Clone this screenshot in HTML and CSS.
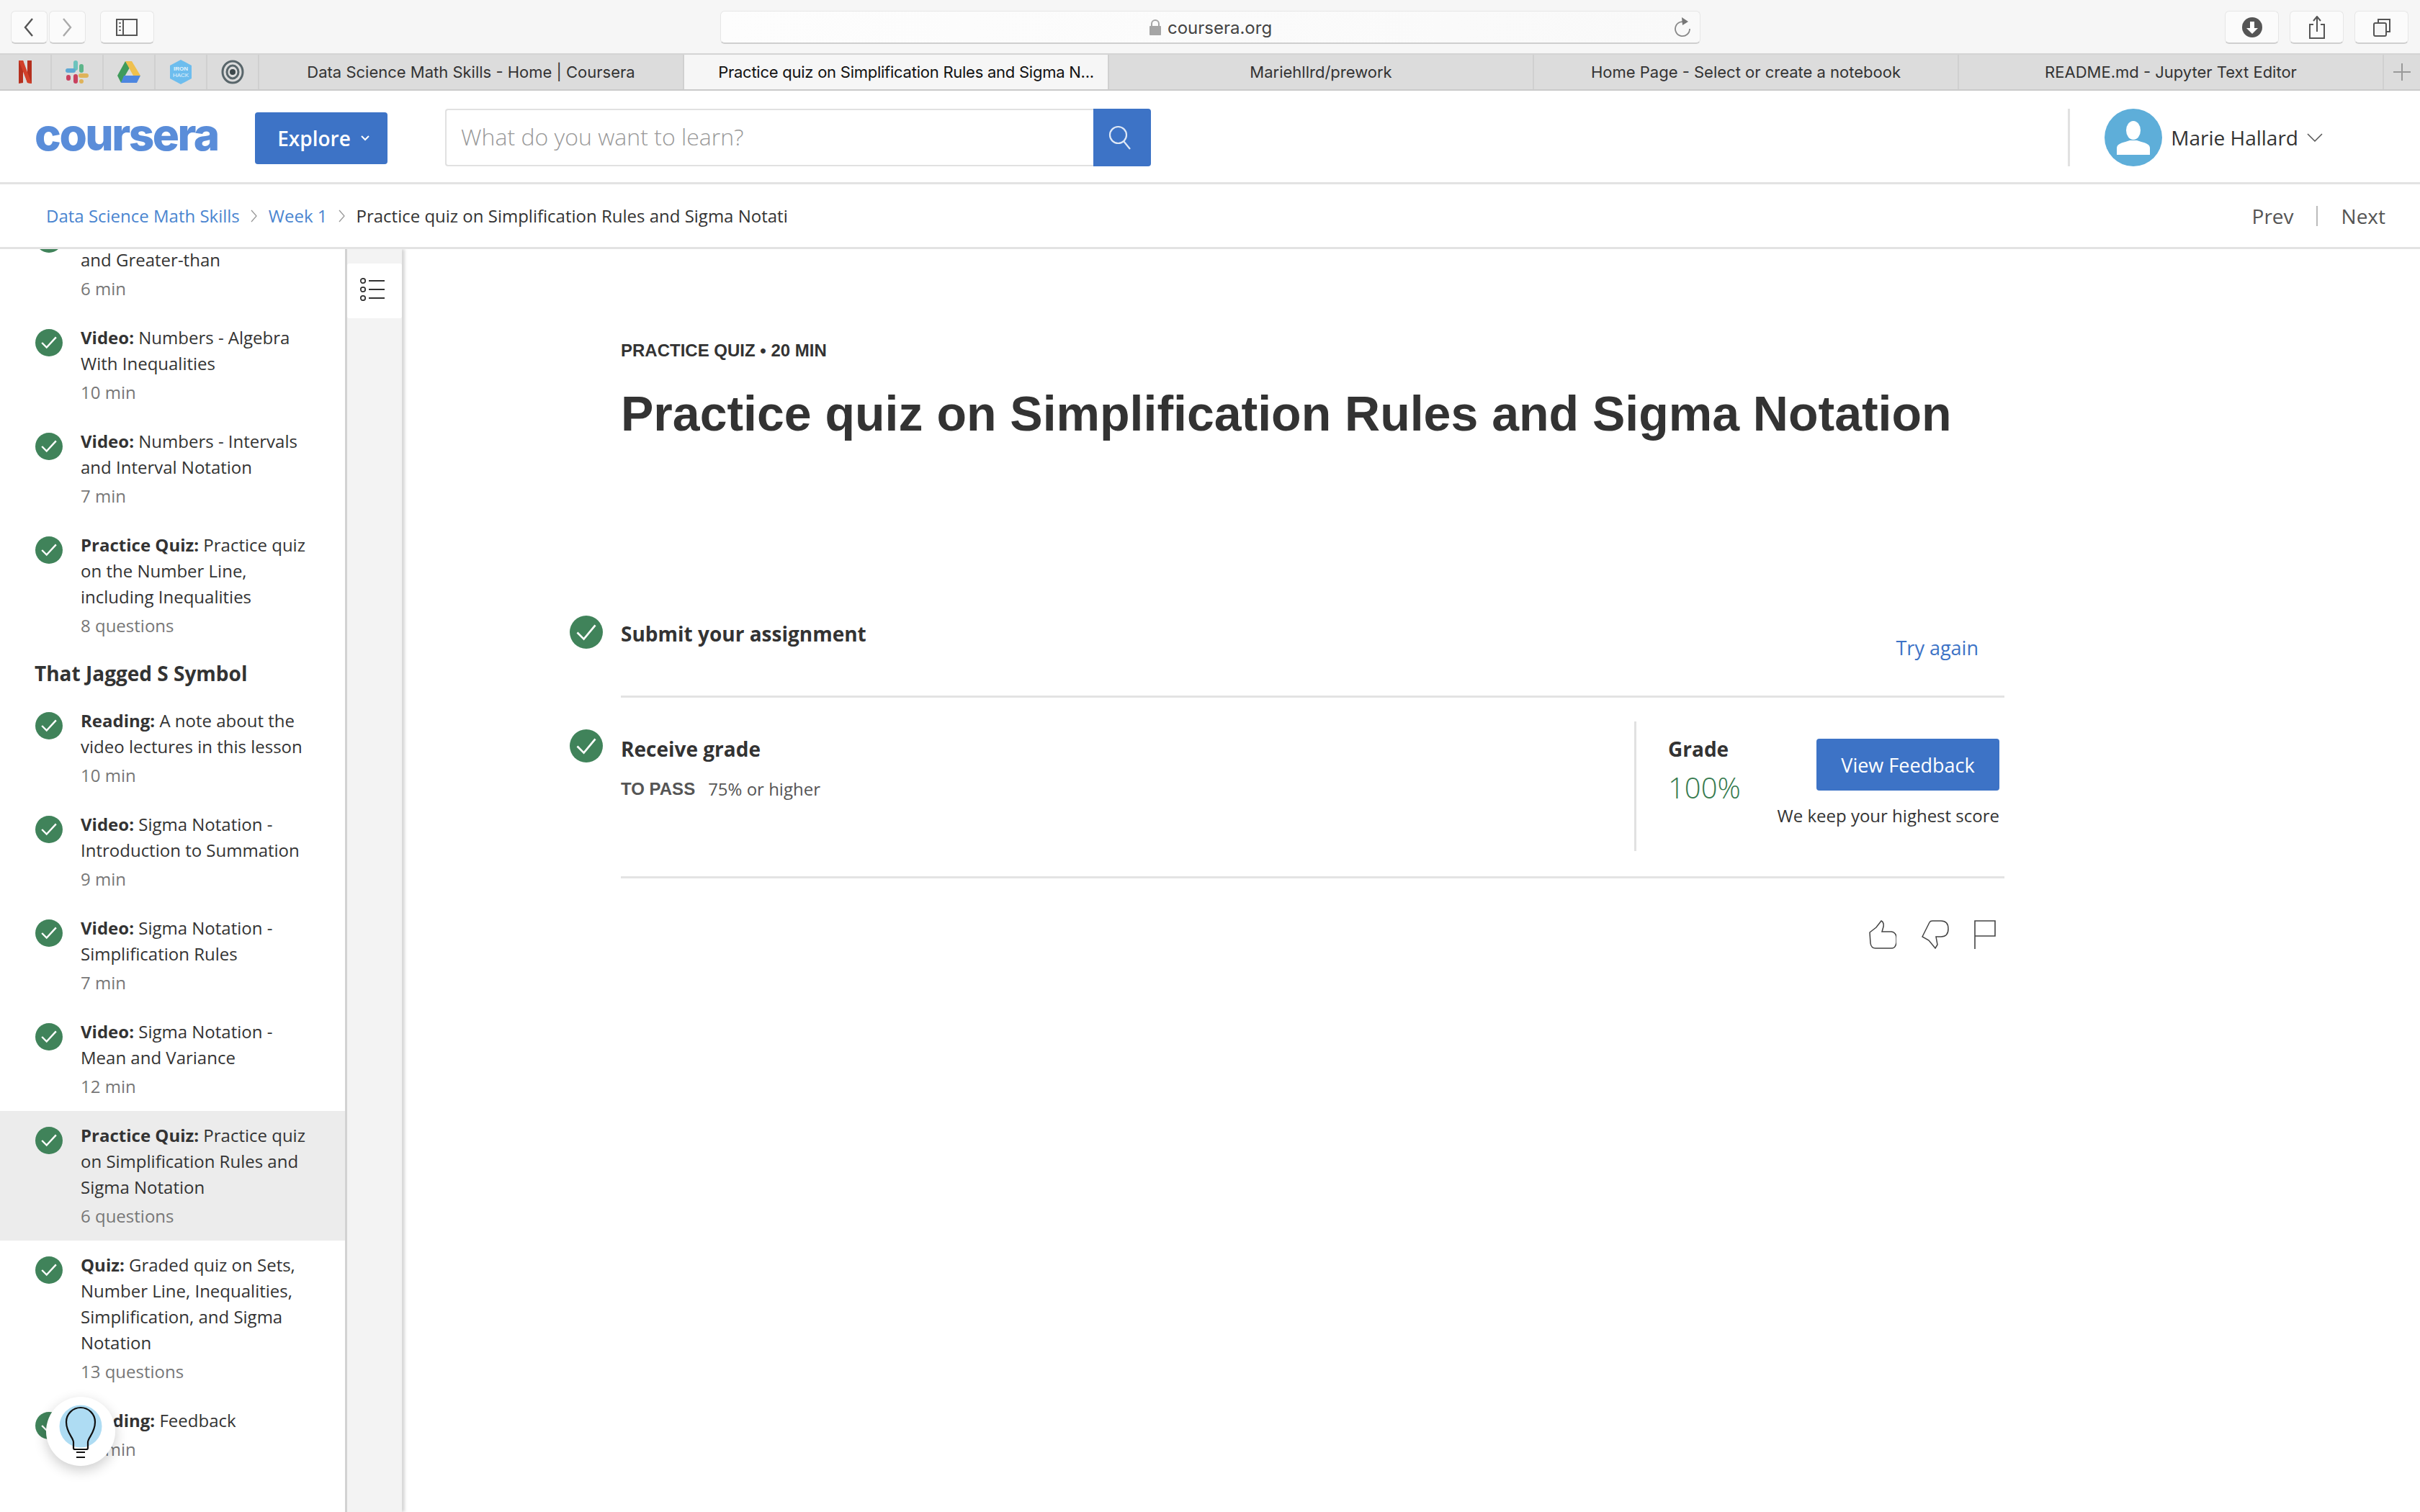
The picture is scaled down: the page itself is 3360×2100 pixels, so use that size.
FILE: index.html
```html
<!DOCTYPE html>
<html lang="en">
    <head>
        <meta charset="UTF-8" />
        <meta name="viewport" content="width=device-width, initial-scale=1.0" />
        <title>Practice quiz on Simplification Rules and Sigma Notation | Coursera</title>
        <link rel="stylesheet" href="styles.css">
    </head>
    <body>
        <!-- browser chrome -->
        <div class="toolbar">
            <div class="tool-btn nav-btn">
                <svg width="14" height="26" viewBox="0 0 14 26"><path d="M12 1 2 13l10 12" fill="none" stroke="#555" stroke-width="2.4"/></svg>
            </div>
            <div class="tool-btn nav-btn nav-next">
                <svg width="14" height="26" viewBox="0 0 14 26"><path d="M2 1l10 12L2 25" fill="none" stroke="#aaa" stroke-width="2.4"/></svg>
            </div>
            <div class="tool-btn sidebar-btn">
                <svg width="30" height="24" viewBox="0 0 30 24"><path d="M1 1h28v22H1zM10 1v22" fill="none" stroke="#555" stroke-width="2"/><path d="M4 5h3v2H4zM4 10h3v2H4zM4 15h3v2H4z" fill="#777"/></svg>
            </div>
            <div class="address">
                <svg class="lock" width="18" height="22" viewBox="0 0 18 22"><path d="M4 10V6a5 5 0 0 1 10 0v4" fill="none" stroke="#a5a5a5" stroke-width="2"/><rect x="1" y="9" width="16" height="13" rx="1" fill="#a5a5a5"/></svg>
                <span class="address-text">coursera.org</span>
                <svg class="reload" width="24" height="28" viewBox="0 0 24 28"><path d="M17 7.5A10 10 0 1 0 22 16" fill="none" stroke="#888" stroke-width="1.8"/><path d="M11 0l9 6-8 5z" fill="#777"/></svg>
            </div>
            <div class="tool-btn">
                <svg width="28" height="28" viewBox="0 0 28 28"><circle cx="14" cy="14" r="14" fill="#555"/><path d="M11 6h6v9h5l-8 8-8-8h5z" fill="#fff"/></svg>
            </div>
            <div class="tool-btn">
                <svg width="24" height="32" viewBox="0 0 24 32"><path d="M7 12H2v19h20V12h-5" fill="none" stroke="#555" stroke-width="2"/><path d="M12 22V2M7 7l5-6 5 6" fill="none" stroke="#555" stroke-width="2"/></svg>
            </div>
            <div class="tool-btn">
                <svg width="26" height="26" viewBox="0 0 26 26"><path d="M8 6V2h16v17h-4" fill="none" stroke="#555" stroke-width="2"/><rect x="2" y="7" width="17" height="18" rx="2" fill="#f6f6f6" stroke="#555" stroke-width="2"/></svg>
            </div>
        </div>

        <div class="tabs">
            <div class="fav">
                <svg width="20" height="32" viewBox="0 0 20 32"><path d="M1 0h6l6 20V0h6v32l-6-1L7 12v19l-6 1z" fill="#b5301f"/><path d="M1 0h6l12 32-6-1z" fill="#d2402a"/></svg>
            </div>
            <div class="fav">
                <svg width="32" height="32" viewBox="0 0 32 32">
                    <rect x="11" y="0" width="6" height="14" rx="3" fill="#6cc3bd"/>
                    <rect x="0" y="11" width="14" height="6" rx="3" fill="#5fa8d3"/>
                    <rect x="19" y="5" width="6" height="12" rx="3" fill="#5eb58a"/>
                    <rect x="18" y="18" width="14" height="6" rx="3" fill="#dfb35a"/>
                    <rect x="11" y="19" width="6" height="13" rx="3" fill="#c9415f"/>
                    <rect x="1" y="20" width="6" height="8" rx="3" fill="#c9415f"/>
                    <rect x="19" y="26" width="6" height="6" rx="3" fill="#dfb35a"/>
                </svg>
            </div>
            <div class="fav">
                <svg width="32" height="30" viewBox="0 0 32 30"><path d="M11 0 0 20l5 10 12-21z" fill="#3f9b5b"/><path d="M11 0h9l12 20H22z" fill="#efc04e"/><path d="M9 20h23l-5 10H5z" fill="#4d86e0"/></svg>
            </div>
            <div class="fav">
                <svg width="32" height="34" viewBox="0 0 32 34"><path d="M16 0l15 8v18l-15 8-15-8V8z" fill="#6dbdee"/><text x="16" y="15" class="hack-text">IRON</text><text x="16" y="24" class="hack-text hack-light">HACK</text></svg>
            </div>
            <div class="fav">
                <svg width="32" height="34" viewBox="0 0 32 34"><ellipse cx="16" cy="17" rx="14" ry="15" fill="none" stroke="#59666b" stroke-width="3"/><path d="M7 9q9-8 19 2M25 25q-9 8-19-2" fill="none" stroke="#dcdcdc" stroke-width="2"/><ellipse cx="16" cy="17" rx="8" ry="9" fill="none" stroke="#59666b" stroke-width="3"/><circle cx="16" cy="17" r="4" fill="#3c474b"/></svg>
            </div>
            <div class="tab">Data Science Math Skills - Home | Coursera</div>
            <div class="tab active">Practice quiz on Simplification Rules and Sigma N...</div>
            <div class="tab">Mariehllrd/prework</div>
            <div class="tab">Home Page - Select or create a notebook</div>
            <div class="tab">README.md - Jupyter Text Editor</div>
            <div class="tab-add">
                <svg width="24" height="24" viewBox="0 0 24 24"><path d="M12 0v24M0 12h24" stroke="#999" stroke-width="2"/></svg>
            </div>
        </div>

        <!-- site header -->
        <header class="site-header">
            <div class="logo">coursera</div>
            <button class="explore" type="button">
                Explore
                <svg width="12" height="8" viewBox="0 0 12 8"><path d="M1 1l5 5 5-5" fill="none" stroke="#fff" stroke-width="2"/></svg>
            </button>
            <div class="search">
                <input class="search-input" type="text" placeholder="What do you want to learn?" />
                <div class="search-btn">
                    <svg width="32" height="34" viewBox="0 0 32 34"><circle cx="13.500" cy="13.500" r="11.500" fill="none" stroke="#dfe8f6" stroke-width="2.200"/><path d="M21 22l9 11" stroke="#dfe8f6" stroke-width="2.200"/></svg>
                </div>
            </div>
            <div class="user">
                <div class="avatar">
                    <svg width="80" height="80" viewBox="0 0 80 80"><ellipse cx="40" cy="30" rx="10" ry="13" fill="#fff"/><path d="M17 64v-9c0-5 4-7 12-9l6-2h10l6 2c8 2 12 4 12 9v9z" fill="#fff"/></svg>
                </div>
                <span class="user-name">Marie Hallard</span>
                <svg width="22" height="12" viewBox="0 0 22 12"><path d="M1 1l10 10L21 1" fill="none" stroke="#555" stroke-width="1.500"/></svg>
            </div>
        </header>

        <div class="crumbs">
            <a class="crumb-link">Data Science Math Skills</a>
            <svg class="crumb-sep" width="10" height="20" viewBox="0 0 10 20"><path d="M1 2l7 8-7 8" fill="none" stroke="#999" stroke-width="1.300"/></svg>
            <a class="crumb-link">Week 1</a>
            <svg class="crumb-sep" width="10" height="20" viewBox="0 0 10 20"><path d="M1 2l7 8-7 8" fill="none" stroke="#999" stroke-width="1.300"/></svg>
            <span class="crumb-current">Practice quiz on Simplification Rules and Sigma Notati</span>
            <div class="pager">
                <span class="pager-prev">Prev</span>
                <span class="pager-next">Next</span>
            </div>
        </div>

        <div class="workspace">
            <!-- lesson list, scrolled a bit -->
            <aside class="sidebar">
                <div class="lesson-list">
                    <div class="lesson">
                        <span class="check"><svg width="22" height="18" viewBox="0 0 22 18"><path d="M2 9l6 6L20 2" fill="none" stroke="#fff" stroke-width="2.200"/></svg></span>
                        <div class="lesson-body">
                            <div class="lesson-title"><b>Video:</b> Numbers - Less-than and Greater-than</div>
                            <div class="lesson-meta">6 min</div>
                        </div>
                    </div>
                    <div class="lesson">
                        <span class="check"><svg width="22" height="18" viewBox="0 0 22 18"><path d="M2 9l6 6L20 2" fill="none" stroke="#fff" stroke-width="2.200"/></svg></span>
                        <div class="lesson-body">
                            <div class="lesson-title"><b>Video:</b> Numbers - Algebra With Inequalities</div>
                            <div class="lesson-meta">10 min</div>
                        </div>
                    </div>
                    <div class="lesson">
                        <span class="check"><svg width="22" height="18" viewBox="0 0 22 18"><path d="M2 9l6 6L20 2" fill="none" stroke="#fff" stroke-width="2.200"/></svg></span>
                        <div class="lesson-body">
                            <div class="lesson-title"><b>Video:</b> Numbers - Intervals and Interval Notation</div>
                            <div class="lesson-meta">7 min</div>
                        </div>
                    </div>
                    <div class="lesson">
                        <span class="check"><svg width="22" height="18" viewBox="0 0 22 18"><path d="M2 9l6 6L20 2" fill="none" stroke="#fff" stroke-width="2.200"/></svg></span>
                        <div class="lesson-body">
                            <div class="lesson-title"><b>Practice Quiz:</b> Practice quiz on the Number Line, including Inequalities</div>
                            <div class="lesson-meta">8 questions</div>
                        </div>
                    </div>
                    <h3 class="lesson-heading">That Jagged S Symbol</h3>
                    <div class="lesson">
                        <span class="check"><svg width="22" height="18" viewBox="0 0 22 18"><path d="M2 9l6 6L20 2" fill="none" stroke="#fff" stroke-width="2.200"/></svg></span>
                        <div class="lesson-body">
                            <div class="lesson-title"><b>Reading:</b> A note about the video lectures in this lesson</div>
                            <div class="lesson-meta">10 min</div>
                        </div>
                    </div>
                    <div class="lesson">
                        <span class="check"><svg width="22" height="18" viewBox="0 0 22 18"><path d="M2 9l6 6L20 2" fill="none" stroke="#fff" stroke-width="2.200"/></svg></span>
                        <div class="lesson-body">
                            <div class="lesson-title"><b>Video:</b> Sigma Notation - Introduction to Summation</div>
                            <div class="lesson-meta">9 min</div>
                        </div>
                    </div>
                    <div class="lesson">
                        <span class="check"><svg width="22" height="18" viewBox="0 0 22 18"><path d="M2 9l6 6L20 2" fill="none" stroke="#fff" stroke-width="2.200"/></svg></span>
                        <div class="lesson-body">
                            <div class="lesson-title"><b>Video:</b> Sigma Notation - Simplification Rules</div>
                            <div class="lesson-meta">7 min</div>
                        </div>
                    </div>
                    <div class="lesson">
                        <span class="check"><svg width="22" height="18" viewBox="0 0 22 18"><path d="M2 9l6 6L20 2" fill="none" stroke="#fff" stroke-width="2.200"/></svg></span>
                        <div class="lesson-body">
                            <div class="lesson-title"><b>Video:</b> Sigma Notation - Mean and Variance</div>
                            <div class="lesson-meta">12 min</div>
                        </div>
                    </div>
                    <div class="lesson lesson-active">
                        <span class="check"><svg width="22" height="18" viewBox="0 0 22 18"><path d="M2 9l6 6L20 2" fill="none" stroke="#fff" stroke-width="2.200"/></svg></span>
                        <div class="lesson-body">
                            <div class="lesson-title"><b>Practice Quiz:</b> Practice quiz on Simplification Rules and Sigma Notation</div>
                            <div class="lesson-meta">6 questions</div>
                        </div>
                    </div>
                    <div class="lesson">
                        <span class="check"><svg width="22" height="18" viewBox="0 0 22 18"><path d="M2 9l6 6L20 2" fill="none" stroke="#fff" stroke-width="2.200"/></svg></span>
                        <div class="lesson-body">
                            <div class="lesson-title"><b>Quiz:</b> Graded quiz on Sets, Number Line, Inequalities, Simplification, and Sigma Notation</div>
                            <div class="lesson-meta">13 questions</div>
                        </div>
                    </div>
                    <div class="lesson">
                        <span class="check"><svg width="22" height="18" viewBox="0 0 22 18"><path d="M2 9l6 6L20 2" fill="none" stroke="#fff" stroke-width="2.200"/></svg></span>
                        <div class="lesson-body">
                            <div class="lesson-title"><b>Reading:</b> Feedback</div>
                            <div class="lesson-meta">10 min</div>
                        </div>
                    </div>
                </div>

                <div class="tip">
                    <svg width="96" height="96" viewBox="0 0 96 96">
                        <circle cx="48" cy="41" r="29.500" fill="#aedcf3"/>
                        <path d="M38 71V63c0-6-10-13-10-28a20 20 0 0 1 40 0c0 15-10 22-10 28v8q0 2-2 2H40q-2 0-2-2z" fill="none" stroke="#111" stroke-width="2.200"/>
                        <path d="M42 77h12M42 84h12" stroke="#111" stroke-width="2"/>
                    </svg>
                </div>
            </aside>

            <div class="rail">
                <div class="rail-btn">
                    <svg width="36" height="32" viewBox="0 0 36 32"><g fill="none" stroke="#333" stroke-width="1.800"><circle cx="5" cy="4" r="3.200"/><circle cx="5" cy="16" r="3.200"/><circle cx="5" cy="28" r="3.200"/></g><path d="M13 4h22M13 16h22M13 28h22" stroke="#333" stroke-width="1.800"/></svg>
                </div>
            </div>

            <main class="content">
                <div class="quiz-head">
                    <div class="kicker">PRACTICE QUIZ • 20 MIN</div>
                    <h1 class="quiz-title">Practice quiz on Simplification Rules and Sigma Notation</h1>
                </div>

                <div class="step step-submit">
                    <span class="step-check"><svg width="26" height="22" viewBox="0 0 26 22"><path d="M2 11l8 8L24 2" fill="none" stroke="#fff" stroke-width="2.400"/></svg></span>
                    <div class="step-body">
                        <div class="step-title">Submit your assignment</div>
                        <a class="try-again">Try again</a>
                    </div>
                </div>

                <div class="step step-grade">
                    <span class="step-check"><svg width="26" height="22" viewBox="0 0 26 22"><path d="M2 11l8 8L24 2" fill="none" stroke="#fff" stroke-width="2.400"/></svg></span>
                    <div class="step-body">
                        <div class="grade-left">
                            <div class="step-title">Receive grade</div>
                            <div class="pass-line"><b>TO PASS</b><span>75% or higher</span></div>
                        </div>
                        <div class="grade-panel">
                            <div class="grade-value">
                                <div class="step-title">Grade</div>
                                <div class="percent">100%</div>
                            </div>
                            <div class="grade-action">
                                <button class="feedback-btn" type="button">View Feedback</button>
                                <div class="grade-note">We keep your highest score</div>
                            </div>
                        </div>
                    </div>
                </div>

                <div class="reactions">
                    <svg width="38" height="40" viewBox="0 0 38 40"><path d="M1 17l9-7 7-9q4 2 3 8l-2 7h13q7 1 7 9v6q-1 8-7 8H9q-6 0-7-7z" fill="none" stroke="#444" stroke-width="1.500"/></svg>
                    <svg width="38" height="40" viewBox="0 0 38 40"><path d="M1 23 11 3q1-2 4-2h12q10 0 10 11 0 11-10 11h-7l2 11-3 5-9-11z" fill="none" stroke="#444" stroke-width="1.500"/></svg>
                    <svg width="30" height="40" viewBox="0 0 30 40"><path d="M1 40V1h28v21H1" fill="none" stroke="#444" stroke-width="1.600"/></svg>
                </div>
            </main>
        </div>
    </body>
</html>
```

FILE: styles.css
```css
* {
    box-sizing: border-box;
}
body {
    margin: 0;
    height: 2100px;
    overflow: hidden;
    background: #fff;
    color: #333;
    font-family: "Open Sans", Arial, sans-serif;
}
svg {
    display: block;
    flex: none;
}

/* browser chrome */
.toolbar {
    height: 76px;
    padding: 15px 16px 0 15px;
    display: flex;
    gap: 15px;
    background: #f6f6f6;
    border-bottom: 2px solid #d4d4d4;
}
.tool-btn {
    width: 75px;
    height: 46px;
    display: flex;
    align-items: center;
    justify-content: center;
    background: #fbfbfb;
    border: 1px solid #e6e6e6;
    border-bottom: 2px solid #cfcfcf;
    border-radius: 6px;
}
.nav-btn {
    width: 51px;
}
.nav-next {
    margin-left: -13px;
}
.sidebar-btn {
    margin-left: 5px;
}
.address {
    width: 1363px;
    height: 46px;
    margin: 0 713px 0 771px;
    padding-top: 1px;
    display: flex;
    align-items: center;
    justify-content: center;
    gap: 8px;
    position: relative;
    background: linear-gradient(90deg, #fdfdfd, #f9f9f9);
    border: 1px solid #e6e6e6;
    border-bottom: 2px solid #cfcfcf;
    border-radius: 6px;
    font-family: Inter, sans-serif;
    font-size: 24px;
    color: #444;
}
.reload {
    position: absolute;
    right: 12px;
    top: 8px;
}
.tabs {
    height: 50px;
    display: flex;
    background: #dcdcdc;
    border-bottom: 2px solid #cacaca;
    font-family: Inter, sans-serif;
    font-size: 22px;
    color: #333;
}
.fav {
    width: 72px;
    display: flex;
    align-items: center;
    justify-content: center;
    border-right: 2px solid #d0d0d0;
}
.hack-text {
    font-family: "Liberation Sans", sans-serif;
    font-size: 8px;
    font-weight: bold;
    fill: #e4f2fb;
    text-anchor: middle;
}
.hack-light {
    font-weight: normal;
}
.tab {
    width: 590px;
    display: flex;
    align-items: center;
    justify-content: center;
    border-right: 2px solid #d0d0d0;
    white-space: nowrap;
}
.tab.active {
    padding-left: 28px;
    background: #f6f6f6;
    color: #111;
    letter-spacing: -0.25px;
}
.tab-add {
    flex: 1;
    display: flex;
    align-items: center;
    justify-content: center;
}

/* site header */
.site-header {
    height: 130px;
    padding: 25px 0 0 50px;
    display: flex;
    align-items: flex-start;
    border-bottom: 3px solid #e3e3e3;
}
.logo {
    width: 256px;
    height: 80px;
    margin-left: -2px;
    font-family: Inter, sans-serif;
    font-size: 62px;
    font-weight: 800;
    line-height: 72px;
    letter-spacing: -2.500px;
    color: #5a8dd9;
    white-space: nowrap;
}
.explore {
    width: 184px;
    height: 72px;
    margin: 5px 0 0 50px;
    padding: 0 0 0 6px;
    display: flex;
    align-items: center;
    justify-content: center;
    gap: 14px;
    background: #3d73c6;
    border: none;
    border-radius: 4px;
    color: #fff;
    font-family: "Open Sans", sans-serif;
    font-size: 28px;
    font-weight: 600;
}
.search {
    width: 980px;
    height: 80px;
    margin-left: 80px;
    display: flex;
}
.search-input {
    flex: 1;
    height: 80px;
    padding: 0 20px 4px;
    border: 2px solid #e1e1e1;
    border-right: none;
    border-radius: 4px 0 0 4px;
    outline: none;
    font-family: "Open Sans", sans-serif;
    font-size: 32px;
    font-weight: 300;
}
.search-input::placeholder {
    color: #999;
    opacity: 1;
}
.search-btn {
    width: 80px;
    padding-right: 6px;
    display: flex;
    align-items: center;
    justify-content: center;
    background: #3d73c6;
    border-radius: 0 4px 4px 0;
}
.user {
    height: 80px;
    margin-left: auto;
    margin-right: 135px;
    padding-left: 48px;
    display: flex;
    align-items: center;
    border-left: 3px solid #e1e1e1;
    font-size: 28px;
}
.avatar {
    width: 80px;
    height: 80px;
    margin-right: 12px;
    background: #5eaed9;
    border-radius: 50%;
}
.user-name {
    margin-right: 12px;
    color: #333;
}
.crumbs {
    height: 90px;
    padding-left: 64px;
    padding-right: 48px;
    display: flex;
    align-items: center;
    border-bottom: 3px solid #e3e3e3;
    font-size: 24px;
}
.crumb-link {
    color: #4a85d0;
}
.crumb-sep {
    margin: 0 15px;
}
.crumb-current {
    color: #333;
}
.pager {
    margin-left: auto;
    display: flex;
    align-items: center;
    font-size: 28px;
    color: #555;
}
.pager-prev {
    padding-right: 31px;
    border-right: 2px solid #bbb;
    line-height: 28px;
}
.pager-next {
    padding-left: 33px;
}

/* lessons */
.workspace {
    height: 1754px;
    display: flex;
    overflow: hidden;
}
.sidebar {
    width: 482px;
    flex: none;
    position: relative;
    overflow: hidden;
    border-right: 3px solid #d2d2d2;
}
.lesson-list {
    margin-top: -55px;
}
.lesson {
    padding: 16px 40px 16px 49px;
    display: flex;
    gap: 25px;
}
.lesson-active {
    background: #ececec;
}
.check {
    width: 38px;
    height: 38px;
    margin-top: 6px;
    flex: none;
    display: flex;
    align-items: center;
    justify-content: center;
    background: #40835a;
    border-radius: 50%;
}
.check svg {
    width: 24px;
    height: 20px;
}
.lesson-title {
    font-size: 24px;
    line-height: 36px;
    color: #333;
}
.lesson-meta {
    margin-top: 4px;
    font-size: 24px;
    line-height: 36px;
    color: #777;
}
.lesson-heading {
    height: 64px;
    margin: 0;
    padding-left: 48px;
    font-size: 28px;
    font-weight: 700;
    line-height: 64px;
}
.tip {
    position: absolute;
    left: 64px;
    top: 1594px;
    width: 96px;
    height: 96px;
    background: #fff;
    border-radius: 50%;
    box-shadow: 0 6px 18px rgba(0, 0, 0, 0.2);
}
.rail {
    width: 76px;
    flex: none;
    padding-top: 20px;
    background: #f3f3f3;
    box-shadow: 4px 0 4px rgba(0, 0, 0, 0.16);
}
.rail-btn {
    width: 76px;
    height: 76px;
    padding: 0 6px 5px 0;
    display: flex;
    align-items: center;
    justify-content: center;
    background: #fff;
    border-radius: 3px;
}

/* main column */
.content {
    width: 1992px;
    margin-left: 233px;
}
.quiz-head {
    padding-top: 127px;
    margin-left: 71px;
}
.kicker {
    font-family: "Liberation Sans", Arial, sans-serif;
    font-size: 24px;
    font-weight: 700;
    line-height: 28px;
    color: #333;
}
.quiz-title {
    margin: 28px 0 0;
    font-family: "Liberation Sans", Arial, sans-serif;
    font-size: 68px;
    font-weight: 700;
    line-height: 90px;
    color: #333;
    white-space: nowrap;
}
.step {
    display: grid;
    grid-template-columns: 71px 1fr;
}
.step-check {
    width: 46px;
    height: 46px;
    display: flex;
    align-items: center;
    justify-content: center;
    background: #40835a;
    border-radius: 50%;
}
.step-check svg {
    width: 30px;
    height: 25px;
}
.step-body {
    display: flex;
    border-bottom: 3px solid #e3e3e3;
}
.step-title {
    font-size: 28px;
    font-weight: 700;
    line-height: 40px;
    color: #333;
}
.step-submit {
    margin-top: 236px;
}
.step-submit .step-body {
    height: 114px;
    padding: 5px 36px 0 0;
    justify-content: space-between;
}
.try-again {
    margin-top: 22px;
    font-size: 27px;
    font-weight: 500;
    line-height: 36px;
    color: #3d73c6;
}
.step-grade .step-check {
    margin-top: 44px;
}
.step-grade .step-body {
    height: 251px;
    padding: 33px 0 35px;
    justify-content: space-between;
}
.grade-left {
    padding-top: 18px;
}
.pass-line {
    margin-top: 18px;
    display: flex;
    gap: 18px;
    font-size: 24px;
    line-height: 36px;
    color: #555;
}
.pass-line b {
    font-family: "Liberation Sans", Arial, sans-serif;
    font-size: 24px;
}
.grade-panel {
    width: 514px;
    padding: 0 7px 0 44px;
    display: flex;
    justify-content: space-between;
    border-left: 3px solid #e1e1e1;
}
.grade-value {
    padding-top: 18px;
}
.percent {
    margin-top: 6px;
    font-size: 40px;
    font-weight: 300;
    line-height: 56px;
    color: #357a4e;
}
.grade-action {
    padding-top: 24px;
    display: flex;
    flex-direction: column;
    align-items: flex-end;
}
.feedback-btn {
    width: 254px;
    height: 72px;
    background: #3d73c6;
    border: none;
    border-radius: 4px;
    color: #fff;
    font-family: "Open Sans", sans-serif;
    font-size: 27px;
}
.grade-note {
    margin-top: 17px;
    font-size: 24px;
    line-height: 36px;
    color: #333;
    white-space: nowrap;
}
.reactions {
    margin-top: 58px;
    padding-right: 12px;
    display: flex;
    justify-content: flex-end;
    gap: 35px;
}
```
